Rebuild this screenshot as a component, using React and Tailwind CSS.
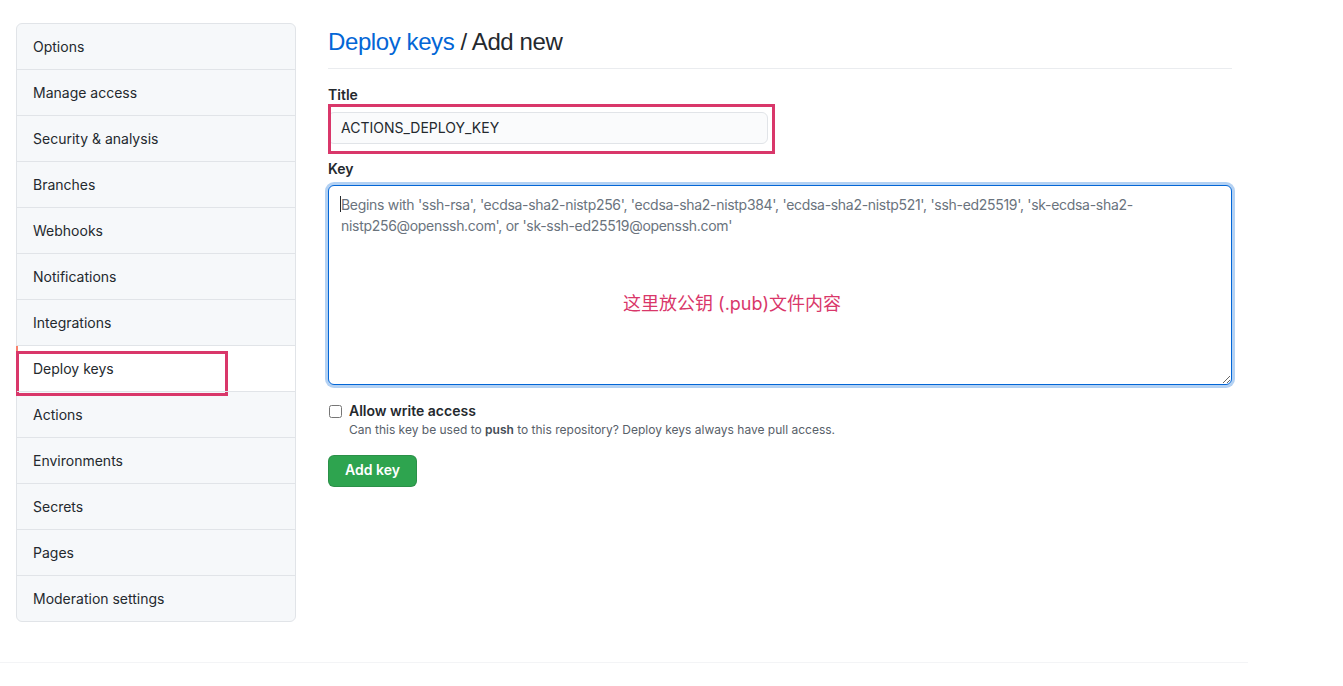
import React from 'react';

const menuItems = [
  'Options',
  'Manage access',
  'Security & analysis',
  'Branches',
  'Webhooks',
  'Notifications',
  'Integrations',
  'Deploy keys',
  'Actions',
  'Environments',
  'Secrets',
  'Pages',
  'Moderation settings',
];

function Sidebar() {
  return (
    <nav className="w-[280px] shrink-0 self-start rounded-md border border-[#e1e4e8] bg-[#f6f8fa]">
      {menuItems.map((item, i) => {
        const selected = item === 'Deploy keys';
        return (
          <div
            key={item}
            className={`relative px-4 py-3 text-sm leading-[21px] text-[#24292e] ${
              i > 0 ? 'border-t border-[#e1e4e8]' : ''
            } ${selected ? 'bg-white' : ''} ${i === 0 ? 'rounded-t-md' : ''} ${
              i === menuItems.length - 1 ? 'rounded-b-md' : ''
            }`}
          >
            {selected && (
              <>
                <span className="absolute left-[-1px] top-0 bottom-0 w-[2px] bg-[#f9826c]" />
                {/* annotation box */}
                <span className="absolute left-[-1px] top-[5px] w-[212px] h-[45px] border-[3px] border-[#d9376a] pointer-events-none" />
              </>
            )}
            {item}
          </div>
        );
      })}
    </nav>
  );
}

export default function App() {
  return (
    <div className="min-h-screen bg-white font-['Inter','Noto_Sans_CJK_SC',sans-serif]">
      <div className="w-[1248px] px-4 pt-[23px] pb-10 border-b border-[#f3f4f6] flex gap-8">
        <Sidebar />

        <main className="flex-1">
          {/* Subhead */}
          <div className="pt-px pb-2 mb-[15px] border-b border-[#eaecef]">
            <h2 className="font-['Liberation_Sans',sans-serif] text-2xl leading-9 font-normal tracking-[-0.4px] text-[#24292e]">
              <a href="#" className="text-[#0366d6]">Deploy keys</a> / Add new
            </h2>
          </div>

          {/* Title */}
          <div className="relative mb-[14px]">
            <label className="block text-sm leading-[21px] font-semibold text-[#24292e] mb-[7px]">Title</label>
            <input
              type="text"
              defaultValue="ACTIONS_DEPLOY_KEY"
              className="w-[440px] h-8 px-3 pb-[2px] rounded-md border border-[#e1e4e8] bg-[#fafbfc] text-sm text-[#24292e] outline-none"
            />
            <span className="absolute left-0 top-[20px] w-[447px] h-[50px] border-[3px] border-[#d9376a] pointer-events-none" />
          </div>

          {/* Key */}
          <div className="mb-[15px]">
            <label className="block text-sm leading-[21px] font-semibold text-[#24292e] mb-[6px]">Key</label>
            <div className="relative">
              <textarea
                placeholder="Begins with 'ssh-rsa', 'ecdsa-sha2-nistp256', 'ecdsa-sha2-nistp384', 'ecdsa-sha2-nistp521', 'ssh-ed25519', 'sk-ecdsa-sha2-nistp256@openssh.com', or 'sk-ssh-ed25519@openssh.com'"
                className="block w-full h-[200px] px-3 pt-2 pb-[10px] rounded-md border border-[#0366d6] shadow-[0_0_0_3px_rgba(3,102,214,0.3)] bg-white text-sm leading-[21px] tracking-[-0.3px] text-[#24292e] placeholder:text-[#6a737d] outline-none"
              />
              <span className="absolute left-[12px] top-[11px] w-px h-[16px] bg-[#24292e]" />
              <span className="absolute left-[295px] top-[107px] text-lg leading-6 text-[#d9376a] pointer-events-none">
                这里放公钥 (.pub)文件内容
              </span>
            </div>
          </div>

          {/* Checkbox */}
          <div className="flex items-start gap-[7px] mb-4">
            <input type="checkbox" className="mt-[5px] ml-px w-[13px] h-[13px]" />
            <div>
              <label className="block text-sm leading-[21px] font-semibold text-[#24292e]">Allow write access</label>
              <p className="text-xs leading-[18px] text-[#586069]">
                Can this key be used to <strong className="font-semibold text-[#444d56]">push</strong> to this repository? Deploy keys always have pull access.
              </p>
            </div>
          </div>

          <button className="h-8 px-4 pb-[2px] rounded-md border border-[rgba(27,31,35,0.15)] bg-[#2ea44f] text-sm font-semibold text-white">
            Add key
          </button>
        </main>
      </div>
    </div>
  );
}
